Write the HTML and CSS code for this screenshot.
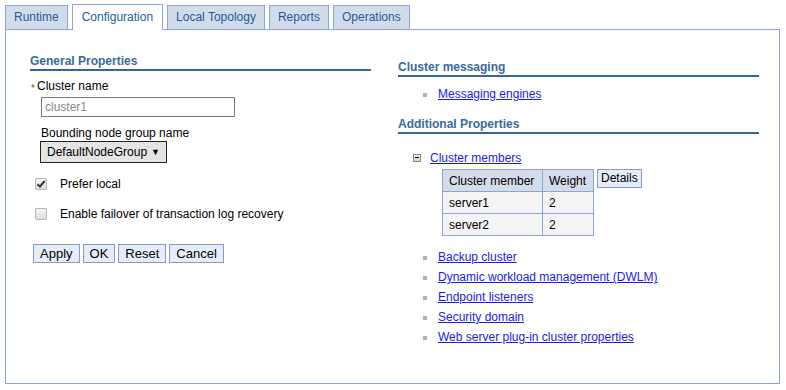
FILE: index.html
```html
<!DOCTYPE html>
<html lang="en">
<head>
    <meta charset="UTF-8">
    <title>Cluster Configuration</title>
    <link rel="stylesheet" href="styles.css">
</head>
<body>
    <div class="page">
        <ul class="tabs">
            <li class="tab">Runtime</li>
            <li class="tab active">Configuration</li>
            <li class="tab">Local Topology</li>
            <li class="tab">Reports</li>
            <li class="tab">Operations</li>
        </ul>

        <div class="panel">
            <div class="col left">
                <h3 class="section-title">General Properties</h3>

                <div class="field-label required"><svg class="req" width="4" height="4" viewBox="0 0 4 4"><path d="M2 0 L4 2 L2 4 L0 2 Z" fill="#b89030"/></svg><span>Cluster name</span></div>
                <input class="text-input" type="text" value="cluster1" readonly>

                <div class="field-label indent">Bounding node group name</div>
                <div class="select">DefaultNodeGroup <span class="arrow">&#9660;</span></div>

                <div class="check-row first">
                    <span class="checkbox">
                        <svg width="10" height="10" viewBox="0 0 10 10"><path d="M1.5 5.2 L4 7.6 L8.6 2" fill="none" stroke="#333" stroke-width="2"/></svg>
                    </span>
                    <span>Prefer local</span>
                </div>
                <div class="check-row">
                    <span class="checkbox"></span>
                    <span>Enable failover of transaction log recovery</span>
                </div>

                <div class="actions">
                    <button class="btn">Apply</button>
                    <button class="btn">OK</button>
                    <button class="btn">Reset</button>
                    <button class="btn">Cancel</button>
                </div>
            </div>

            <div class="col right">
                <h3 class="section-title">Cluster messaging</h3>
                <ul class="links first-links">
                    <li><a href="#">Messaging engines</a></li>
                </ul>

                <h3 class="section-title second">Additional Properties</h3>
                <div class="tree-row">
                    <span class="collapse"></span>
                    <a href="#">Cluster members</a>
                </div>
                <div class="members">
                    <table class="grid">
                        <tr><th class="c1">Cluster member</th><th class="c2">Weight</th></tr>
                        <tr><td>server1</td><td>2</td></tr>
                        <tr><td>server2</td><td>2</td></tr>
                    </table>
                    <button class="btn small">Details</button>
                </div>

                <ul class="links more-links">
                    <li><a href="#">Backup cluster</a></li>
                    <li><a href="#">Dynamic workload management (DWLM)</a></li>
                    <li><a href="#">Endpoint listeners</a></li>
                    <li><a href="#">Security domain</a></li>
                    <li><a href="#">Web server plug-in cluster properties</a></li>
                </ul>
            </div>
        </div>
    </div>
</body>
</html>
```

FILE: styles.css
```css
body {
    margin: 0;
    font-family: "Liberation Sans", Arial, sans-serif;
    font-size: 12px;
    color: #000;
    background-color: #fff;
}
.page {
    padding: 4px 6px 0 5px;
}
.tabs {
    list-style: none;
    margin: 0;
    padding: 0;
    display: flex;
    align-items: flex-end;
    gap: 4px;
    height: 25px;
}
.tab {
    height: 24px;
    box-sizing: border-box;
    padding: 0 8px;
    line-height: 23px;
    font-size: 12px;
    color: #245d98;
    background-color: #d2dbea;
    border: 1px solid #8ba6d6;
    border-bottom: none;
}
.tab.active {
    height: 26px;
    line-height: 24px;
    padding: 0 9px;
    background-color: #fff;
    margin-bottom: -1px;
    position: relative;
}
.panel {
    height: 355px;
    box-sizing: border-box;
    border: 1px solid #8ba6d6;
    display: grid;
    grid-template-columns: 341px 361px;
    column-gap: 27px;
    padding: 0 0 0 24px;
}
.section-title {
    margin: 24px 0 0 0;
    font-size: 12px;
    line-height: 14px;
    font-weight: bold;
    color: #3a6a9c;
    padding-bottom: 1px;
    border-bottom: 2px solid #336699;
}
.right .section-title {
    margin-top: 30px;
}
.right .section-title.second {
    margin-top: 13px;
}
.field-label {
    line-height: 14px;
    margin-top: 9px;
    margin-left: 11px;
}
.field-label.required {
    display: flex;
    align-items: center;
    margin-top: 8px;
    margin-left: 1px;
}
.req {
    margin-right: 2px;
}
.text-input {
    display: block;
    width: 194px;
    height: 20px;
    box-sizing: border-box;
    margin: 4px 0 0 11px;
    padding: 0 3px;
    border: 1px solid #777;
    font-family: inherit;
    font-size: 12px;
    color: #888;
    outline: none;
}
.select {
    width: 127px;
    height: 22px;
    box-sizing: border-box;
    margin: 1px 0 0 10px;
    padding: 0 0 0 6px;
    border: 1px solid #222;
    background-color: #e4e4e4;
    line-height: 20px;
    display: flex;
    justify-content: space-between;
}
.arrow {
    font-size: 9px;
    margin-right: 6px;
}
.check-row {
    display: flex;
    align-items: center;
    height: 14px;
    margin-top: 16px;
    margin-left: 5px;
}
.check-row.first {
    margin-top: 14px;
}
.checkbox {
    width: 12px;
    height: 12px;
    box-sizing: border-box;
    border: 1px solid #b3b3b3;
    border-radius: 2px;
    background: linear-gradient(#f6f6f6, #dcdcdc);
    margin-right: 13px;
    display: flex;
    align-items: center;
    justify-content: center;
}
.actions {
    display: flex;
    gap: 3px;
    margin-top: 23px;
    margin-left: 3px;
}
.btn {
    font-family: inherit;
    font-size: 13px;
    line-height: 15px;
    height: 19px;
    padding: 1px 6px;
    background-color: #e6edf8;
    border: 1px solid #7f9ccc;
    color: #000;
    border-radius: 0;
}
.btn.small {
    font-size: 12px;
    padding: 1px 3px;
    height: 19px;
}
.links {
    list-style: none;
    margin: 0;
    padding: 0 0 0 25px;
}
.links li {
    line-height: 20px;
    display: flex;
    align-items: center;
}
.links li::before {
    content: "";
    width: 4px;
    height: 4px;
    background-color: #b0b0b0;
    margin-right: 11px;
    margin-top: 1px;
}
.first-links {
    margin-top: 7px;
}
.more-links {
    margin-top: 11px;
}
a {
    color: #1a1aee;
    text-decoration: underline;
}
.tree-row {
    display: flex;
    align-items: center;
    height: 20px;
    margin-top: 14px;
    padding-left: 15px;
}
.collapse {
    width: 8px;
    height: 8px;
    box-sizing: border-box;
    border: 1px solid #888;
    background: linear-gradient(#f0f0f0, #d4d4d4);
    margin-right: 9px;
    position: relative;
}
.collapse::after {
    content: "";
    position: absolute;
    left: 1px;
    top: 2px;
    width: 4px;
    height: 1px;
    background-color: #000;
}
.members {
    display: flex;
    align-items: flex-start;
    gap: 3px;
    margin-top: 1px;
    padding-left: 44px;
}
.grid {
    border-collapse: collapse;
    border: 1px solid #8ba6d6;
}
.grid th,
.grid td {
    height: 22px;
    box-sizing: border-box;
    padding: 0 6px;
    border: 1px solid #8ba6d6;
    font-weight: normal;
    text-align: left;
}
.grid th {
    background-color: #d4dcea;
}
.grid td {
    background-color: #f4f4f4;
}
.grid .c1 {
    width: 100px;
}
.grid .c2 {
    width: 51px;
}
```
